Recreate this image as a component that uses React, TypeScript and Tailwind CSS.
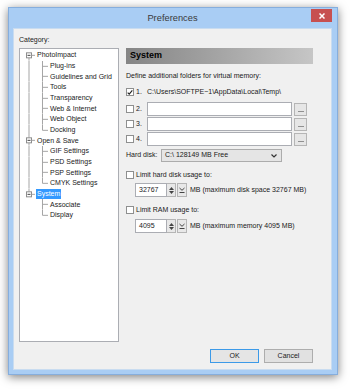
import React from 'react';

const font = { fontFamily: '"Liberation Sans", Arial, sans-serif' };

type Node = { label: string; children: string[] };

const tree: Node[] = [
  {
    label: 'PhotoImpact',
    children: ['Plug-ins', 'Guidelines and Grid', 'Tools', 'Transparency', 'Web & Internet', 'Web Object', 'Docking'],
  },
  { label: 'Open & Save', children: ['GIF Settings', 'PSD Settings', 'PSP Settings', 'CMYK Settings'] },
  { label: 'System', children: ['Associate', 'Display'] },
];

const H = 32 / 3;
const MID = H / 2;
const LINE = '#a5a5a5';

function ParentGlyph({ first, last }: { first: boolean; last: boolean }) {
  return (
    <svg width="16" height={H} viewBox={`0 0 16 ${H}`} className="shrink-0">
      {!first && <line x1="9" y1="0" x2="9" y2={MID - 2.5} stroke={LINE} strokeWidth="1" />}
      {!last && <line x1="9" y1={MID + 2.5} x2="9" y2={H} stroke={LINE} strokeWidth="1" />}
      <rect x="6.5" y={MID - 2.5} width="5" height="5" fill="#fff" stroke="#8d8d8d" strokeWidth="1" />
      <line x1="7.5" y1={MID} x2="10.5" y2={MID} stroke="#404040" strokeWidth="1" />
      <line x1="11.5" y1={MID} x2="15" y2={MID} stroke={LINE} strokeWidth="1" />
    </svg>
  );
}

function ChildGlyph({ outer, last }: { outer: boolean; last: boolean }) {
  return (
    <svg width="29" height={H} viewBox={`0 0 29 ${H}`} className="shrink-0">
      {outer && <line x1="9" y1="0" x2="9" y2={H} stroke={LINE} strokeWidth="1" />}
      <line x1="22.5" y1="0" x2="22.5" y2={last ? MID : H} stroke={LINE} strokeWidth="1" />
      <line x1="22.5" y1={MID} x2="28" y2={MID} stroke={LINE} strokeWidth="1" />
    </svg>
  );
}

function Tree() {
  return (
    <div className="w-[100px] h-[294px] shrink-0 border border-[#abadb3] bg-white pt-[1px]">
      {tree.map((node, i) => (
        <div key={node.label}>
          <div className="flex items-center" style={{ height: H }}>
            <ParentGlyph first={i === 0} last={i === tree.length - 1} />
            <span
              className={
                node.label === 'System'
                  ? 'px-[1px] leading-[10px] bg-[#3399ff] text-white'
                  : 'px-[1px] leading-[10px] text-[#1a1a1a]'
              }
            >
              {node.label}
            </span>
          </div>
          {node.children.map((c, j) => (
            <div key={c} className="flex items-center" style={{ height: H }}>
              <ChildGlyph outer={i < tree.length - 1} last={j === node.children.length - 1} />
              <span className="px-[1px] leading-[10px] text-[#1a1a1a]">{c}</span>
            </div>
          ))}
        </div>
      ))}
    </div>
  );
}

function Checkbox({ checked }: { checked?: boolean }) {
  return (
    <div className="w-[8px] h-[8px] shrink-0 border border-[#8e8f8f] bg-white flex items-center justify-center">
      {checked && (
        <svg width="7" height="7" viewBox="0 0 7 7">
          <path d="M0.8 3.6 L2.6 5.5 L6.2 1" fill="none" stroke="#222" strokeWidth="1.3" />
        </svg>
      )}
    </div>
  );
}

function Browse() {
  return (
    <div className="w-[13px] h-[13px] shrink-0 border border-[#b5b5b5] bg-[#e6e6e6] flex items-end justify-center pb-[3px]">
      <div className="w-[6px] h-px bg-[#909090]" />
    </div>
  );
}

function FolderRow({ n }: { n: number }) {
  return (
    <div className="flex items-center h-[14px]">
      <Checkbox />
      <span className="ml-[2px] w-[11px] text-[#1a1a1a]">{n}.</span>
      <div className="w-[145px] h-[14px] border border-[#abadb3] bg-white" />
      <div className="ml-[2px]">
        <Browse />
      </div>
    </div>
  );
}

function Spinner({ value, note }: { value: string; note: string }) {
  return (
    <div className="flex items-center h-[14px] ml-[9px]">
      <div className="w-[32px] h-[14px] border border-[#abadb3] bg-white flex items-center pl-[3px] text-[#1a1a1a]">
        {value}
      </div>
      <div className="w-[9px] h-[14px] border border-l-0 border-[#b5b5b5] bg-[#e8e8e8] flex flex-col items-center justify-center gap-[1px]">
        <svg width="5" height="3" viewBox="0 0 5 3">
          <path d="M0 3 L2.5 0 L5 3 Z" fill="#444" />
        </svg>
        <svg width="5" height="3" viewBox="0 0 5 3">
          <path d="M0 0 L2.5 3 L5 0 Z" fill="#444" />
        </svg>
      </div>
      <div className="w-[10px] h-[14px] ml-[1px] border border-[#b5b5b5] bg-[#e8e8e8] flex items-center justify-center">
        <svg width="6" height="6" viewBox="0 0 6 6">
          <path d="M0.5 1 L3 3.3 L5.5 1" fill="none" stroke="#444" strokeWidth="1" />
          <line x1="0.5" y1="5.5" x2="5.5" y2="5.5" stroke="#444" strokeWidth="1" />
        </svg>
      </div>
      <span className="ml-[3px] text-[#1a1a1a]">{note}</span>
    </div>
  );
}

function SystemPanel() {
  return (
    <div className="w-[188px] flex flex-col text-[#1a1a1a]">
      <div className="h-[16px] flex items-center pl-[4px] bg-gradient-to-r from-[#858585] to-[#c6c6c6]">
        <span className="text-[9px] font-bold text-black">System</span>
      </div>
      <div className="mt-[7px] leading-[10px]">Define additional folders for virtual memory:</div>
      <div className="mt-[4px] flex flex-col gap-[1px]">
        <div className="flex items-center h-[14px] mb-[2px]">
          <Checkbox checked />
          <span className="ml-[2px] w-[11px]">1.</span>
          <span>C:\Users\SOFTPE~1\AppData\Local\Temp\</span>
        </div>
        <FolderRow n={2} />
        <FolderRow n={3} />
        <FolderRow n={4} />
      </div>
      <div className="mt-[3px] flex items-center h-[13px]">
        <span className="w-[35px]">Hard disk:</span>
        <div className="w-[121px] h-[13px] border border-[#acacac] bg-[#e5e5e5] flex items-center justify-between pl-[3px] pr-[4px]">
          <span>C:\ 128149 MB Free</span>
          <svg width="6" height="4" viewBox="0 0 6 4">
            <path d="M0.5 0.5 L3 3 L5.5 0.5" fill="none" stroke="#333" strokeWidth="1.2" />
          </svg>
        </div>
      </div>
      <div className="mt-[8px] flex items-center h-[10px]">
        <Checkbox />
        <span className="ml-[2px]">Limit hard disk usage to:</span>
      </div>
      <div className="mt-[3px]">
        <Spinner value="32767" note="MB (maximum disk space 32767 MB)" />
      </div>
      <div className="mt-[8px] flex items-center h-[10px]">
        <Checkbox />
        <span className="ml-[2px]">Limit RAM usage to:</span>
      </div>
      <div className="mt-[4px]">
        <Spinner value="4095" note="MB (maximum memory 4095 MB)" />
      </div>
    </div>
  );
}

function Button({ label, primary }: { label: string; primary?: boolean }) {
  return (
    <div
      className={
        primary
          ? 'w-[49px] h-[14px] border border-[#3c9ae8] bg-[#e5e5e5] flex items-center justify-center text-[#1a1a1a]'
          : 'w-[49px] h-[14px] border border-[#adadad] bg-[#e1e1e1] flex items-center justify-center text-[#1a1a1a]'
      }
    >
      {label}
    </div>
  );
}

export default function App() {
  return (
    <div className="w-[350px] h-[389px] bg-white pt-[7px] pl-[8px] text-[7px]" style={font}>
      <div className="w-[330px] h-[368px] flex flex-col border border-[#86aedd] bg-[#a9cdf4] shadow-[0_2px_9px_rgba(0,0,0,0.5)]">
        <div className="h-[20px] flex items-start pl-[4px] pr-[5px]">
          <div className="w-[21px]" />
          <div className="flex-1 text-center text-[9.3px] leading-[20px] text-[#3a3a3a]">Preferences</div>
          <div className="mt-[1px] w-[21px] h-[13px] bg-[#c75050] flex items-center justify-center">
            <svg width="6" height="6" viewBox="0 0 6 6">
              <path d="M0.5 0.5 L5.5 5.5 M5.5 0.5 L0.5 5.5" stroke="#fff" strokeWidth="1.5" />
            </svg>
          </div>
        </div>
        <div className="flex-1 ml-[4px] mr-[5px] mb-[4px] bg-[#f0f0f0] border border-[#c9dcf0] pt-[6px] pl-[5px] pr-[18px] flex flex-col">
          <div className="leading-[10px] text-[#1a1a1a]">Category:</div>
          <div className="mt-[3px] flex gap-[7px]">
            <Tree />
            <SystemPanel />
          </div>
          <div className="mt-[7px] flex justify-end gap-[5px]">
            <Button label="OK" primary />
            <Button label="Cancel" />
          </div>
        </div>
      </div>
    </div>
  );
}
